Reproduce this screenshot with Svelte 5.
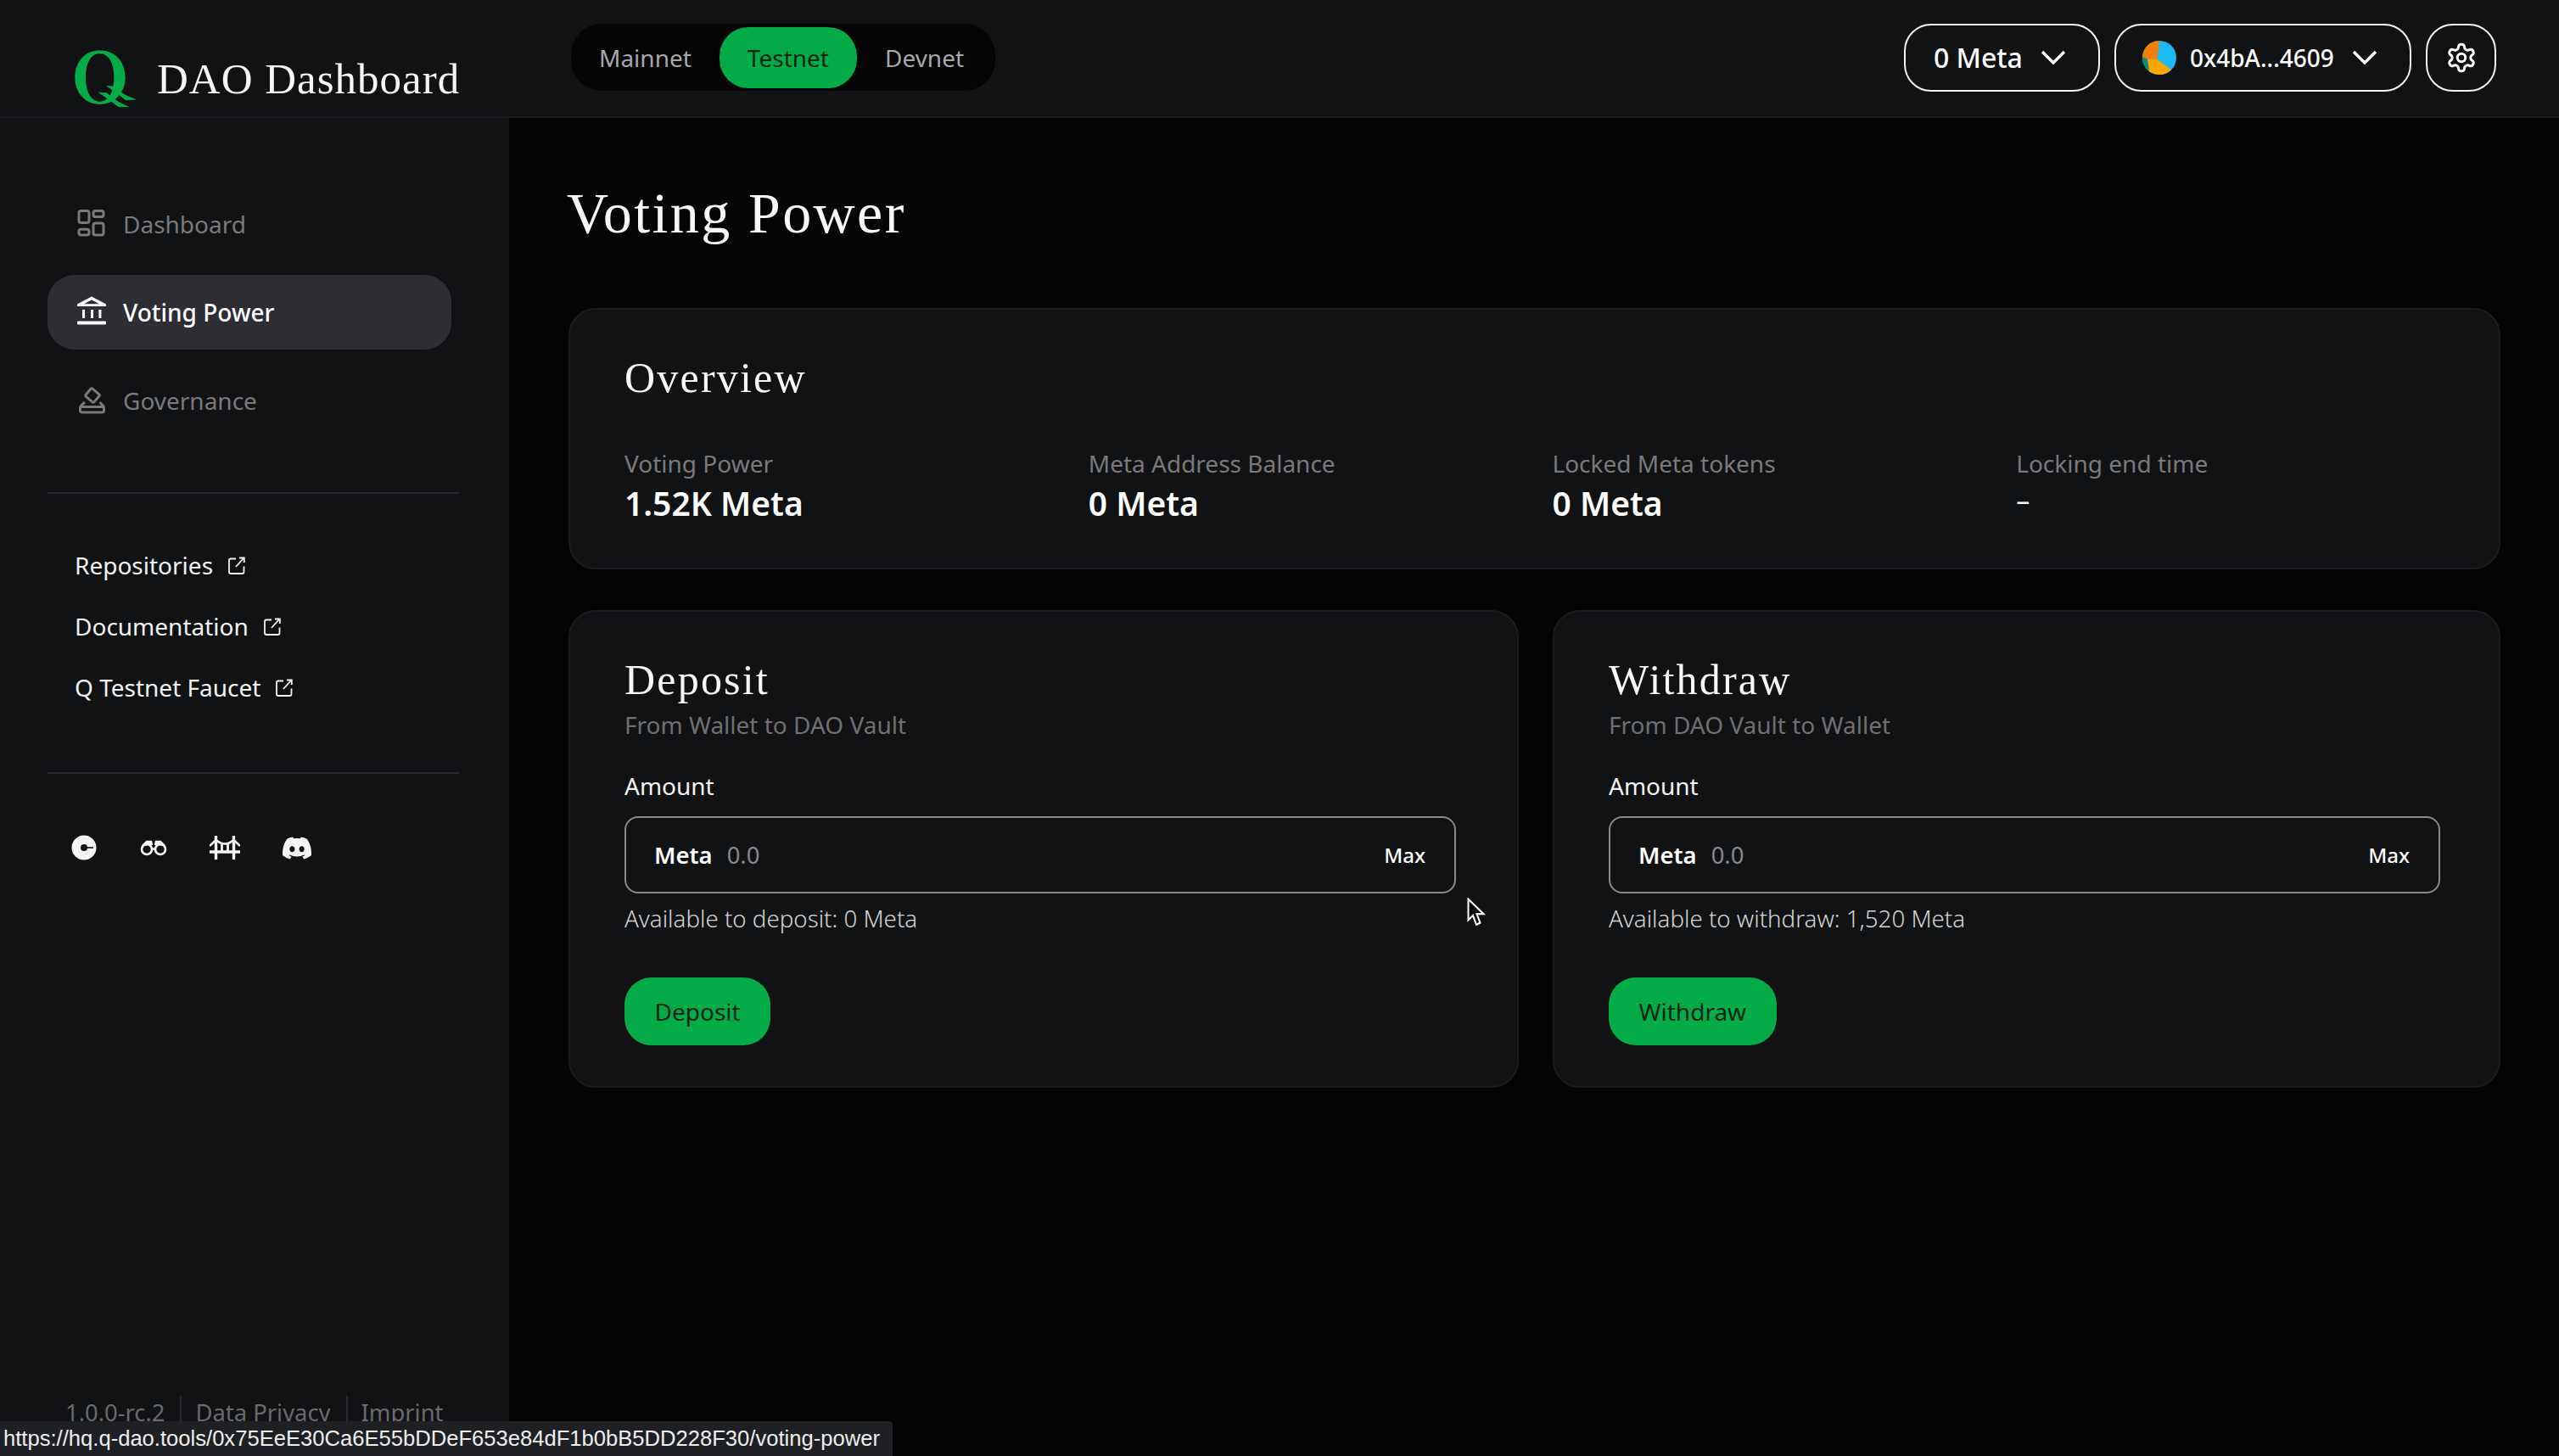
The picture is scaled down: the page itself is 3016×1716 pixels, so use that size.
<script>
    const networks = ["Mainnet", "Testnet", "Devnet"];
    const links = ["Repositories", "Documentation", "Q Testnet Faucet"];
    const stats = [
        { label: "Voting Power", value: "1.52K Meta" },
        { label: "Meta Address Balance", value: "0 Meta" },
        { label: "Locked Meta tokens", value: "0 Meta" },
        { label: "Locking end time", value: "–", empty: true },
    ];
    const forms = [
        { title: "Deposit", from: "From Wallet to DAO Vault", avail: "Available to deposit: 0 Meta" },
        { title: "Withdraw", from: "From DAO Vault to Wallet", avail: "Available to withdraw: 1,520 Meta" },
    ];
</script>

<div class="app">
    <header class="header">
        <div class="brand">
            <svg class="logo" width="90" height="84" viewBox="0 0 270 252">
                <path fill-rule="evenodd" fill="#04ab47" d="M113 22C60 22 25 65 25 118c0 54 36 95 88 95 53 0 90-42 90-96 0-54-37-95-90-95zm0 11c32 0 50 36 50 85 0 50-18 85-50 85-33 0-50-37-50-85 0-50 18-85 50-85z"/>
                <path fill="#04ab47" d="M135 147 L165 149 Q190 178 243 196 L205 199 Q172 172 135 147z"/>
                <path fill="#04ab47" d="M106 170 L138 172 Q170 205 218 222 L180 223 Q145 195 106 170z"/>
            </svg>
            <span class="brand-name">DAO Dashboard</span>
        </div>
        <div class="tabs">
            {#each networks as net}
                <div class="tab" class:active={net === "Testnet"}>{net}</div>
            {/each}
        </div>
        <div class="actions">
            <button class="pill-btn balance">
                <span>0 Meta</span>
                <svg width="30" height="17" viewBox="0 0 30 17"><path d="M2 2l13 13L28 2" fill="none" stroke="#fff" stroke-width="3.400"/></svg>
            </button>
            <button class="pill-btn wallet">
                <svg width="40" height="40" viewBox="0 0 120 120">
                    <defs><clipPath id="round"><circle cx="60" cy="60" r="60"/></clipPath></defs>
                    <g clip-path="url(#round)">
                        <rect width="120" height="120" fill="#1db9f2"/>
                        <path d="M0 0H60L52 65H0z" fill="#f57f00"/>
                        <path d="M15 65 52 65 108 108 70 130 10 120z" fill="#fca600"/>
                        <path d="M0 58 18 65 26 120 0 120z" fill="#0b8a7f"/>
                    </g>
                </svg>
                <span class="addr">0x4bA...4609</span>
                <svg width="30" height="17" viewBox="0 0 30 17"><path d="M2 2l13 13L28 2" fill="none" stroke="#fff" stroke-width="3.400"/></svg>
            </button>
            <button class="pill-btn gear">
                <svg width="38" height="38" viewBox="0 0 24 24" fill="none" stroke="#fff" stroke-width="1.900">
                    <path d="M12.22 2h-.44a2 2 0 0 0-2 2v.18a2 2 0 0 1-1 1.73l-.43.25a2 2 0 0 1-2 0l-.15-.08a2 2 0 0 0-2.73.73l-.22.38a2 2 0 0 0 .73 2.73l.15.1a2 2 0 0 1 1 1.72v.51a2 2 0 0 1-1 1.74l-.15.09a2 2 0 0 0-.73 2.73l.22.38a2 2 0 0 0 2.73.73l.15-.08a2 2 0 0 1 2 0l.43.25a2 2 0 0 1 1 1.73V20a2 2 0 0 0 2 2h.44a2 2 0 0 0 2-2v-.18a2 2 0 0 1 1-1.73l.43-.25a2 2 0 0 1 2 0l.15.08a2 2 0 0 0 2.73-.73l.22-.39a2 2 0 0 0-.73-2.73l-.15-.08a2 2 0 0 1-1-1.74v-.5a2 2 0 0 1 1-1.74l.15-.09a2 2 0 0 0 .73-2.73l-.22-.38a2 2 0 0 0-2.73-.73l-.15.08a2 2 0 0 1-2 0l-.43-.25a2 2 0 0 1-1-1.73V4a2 2 0 0 0-2-2z"/>
                    <circle cx="12" cy="12" r="3"/>
                </svg>
            </button>
        </div>
    </header>

    <div class="body">
        <aside class="sidebar">
            <nav class="nav">
                <div class="nav-item">
                    <svg width="40" height="40" viewBox="0 0 40 40" fill="none" stroke="#7a7a7c" stroke-width="3">
                        <rect x="5" y="4.600" width="12" height="14" rx="2.500"/>
                        <rect x="22" y="4.600" width="12" height="7" rx="2.500"/>
                        <rect x="5" y="26.300" width="12" height="6.700" rx="2.500"/>
                        <rect x="22" y="19" width="12" height="14" rx="2.500"/>
                    </svg>
                    Dashboard
                </div>
                <div class="nav-item active">
                    <svg width="40" height="40" viewBox="0 0 40 40" fill="#fff">
                        <path fill-rule="evenodd" d="M20 1.500 37 10.500V13H3V10.500zM20 5.500 11 10.300H29z"/>
                        <rect x="9" y="17" width="3" height="10"/>
                        <rect x="19" y="17" width="3" height="10"/>
                        <rect x="28.400" y="17" width="3" height="10"/>
                        <rect x="3" y="30.500" width="34" height="4" rx="1"/>
                    </svg>
                    Voting Power
                </div>
                <div class="nav-item">
                    <svg width="40" height="40" viewBox="0 0 40 40" fill="none" stroke="#7a7a7c" stroke-width="3">
                        <rect x="14.500" y="8" width="13" height="12" rx="1.500" transform="rotate(40 21 14)"/>
                        <path d="M12 22 8 25.500Q6.500 27 6.500 29V31.500Q6.500 34 9 34H32Q34.500 34 34.500 31.500V29Q34.500 27 33 25.500L29.500 22"/>
                        <path d="M7 27.500H34"/>
                    </svg>
                    Governance
                </div>
            </nav>

            <div class="divider first"></div>

            <div class="links">
                {#each links as link}
                    <div class="link">
                        {link}
                        <svg width="20" height="21" viewBox="0 0 20 21" fill="none" stroke="#f2f2f2" stroke-width="1.800">
                            <path d="M9 2.500H3Q1 2.500 1 4.500V18Q1 20 3 20H16.500Q18.500 20 18.500 18V11.500"/>
                            <path d="M9 12 18 2M13 1.500H18.800V7"/>
                        </svg>
                    </div>
                {/each}
            </div>

            <div class="divider second"></div>

            <div class="socials">
                <svg width="32" height="30" viewBox="0 0 32 30">
                    <circle cx="16" cy="15" r="14.500" fill="#f5f5f5"/>
                    <circle cx="16" cy="15" r="4" fill="#121316"/>
                    <path d="M16 15H27" stroke="#121316" stroke-width="1.600"/>
                </svg>
                <svg width="32" height="30" viewBox="0 0 32 30" fill="none" stroke="#f5f5f5" stroke-width="2.600">
                    <circle cx="8" cy="17" r="6"/>
                    <circle cx="24" cy="17" r="6"/>
                    <path d="M3 13 8 8H13L14 12M29 13 24 8H19L18 12" fill="#f5f5f5"/>
                    <path d="M14.500 16.500H17.500"/>
                </svg>
                <svg width="36" height="28" viewBox="0 0 36 28" fill="none" stroke="#f5f5f5" stroke-width="3.400">
                    <path d="M7.500 0V28M28.500 0V28M0 19H36"/>
                    <path d="M0 12 7.500 5Q18 14 28.500 5L36 12" stroke-width="2.600"/>
                    <path d="M14.500 10V19M21.500 10V19" stroke-width="2.800"/>
                </svg>
                <svg width="34" height="27" viewBox="0 2.500 24 19" fill="#f5f5f5">
                    <path d="M20.317 4.37a19.791 19.791 0 0 0-4.885-1.515.074.074 0 0 0-.079.037c-.21.375-.444.864-.608 1.25a18.27 18.27 0 0 0-5.487 0 12.64 12.64 0 0 0-.617-1.25.077.077 0 0 0-.079-.037A19.736 19.736 0 0 0 3.677 4.37a.07.07 0 0 0-.032.027C.533 9.046-.32 13.58.099 18.057a.082.082 0 0 0 .031.057 19.9 19.9 0 0 0 5.993 3.03.078.078 0 0 0 .084-.028 14.09 14.09 0 0 0 1.226-1.994.076.076 0 0 0-.041-.106 13.107 13.107 0 0 1-1.872-.892.077.077 0 0 1-.008-.128 10.2 10.2 0 0 0 .372-.292.074.074 0 0 1 .077-.01c3.928 1.793 8.18 1.793 12.062 0a.074.074 0 0 1 .078.01c.12.098.246.198.373.292a.077.077 0 0 1-.006.127 12.299 12.299 0 0 1-1.873.892.077.077 0 0 0-.041.107c.36.698.772 1.362 1.225 1.993a.076.076 0 0 0 .084.028 19.839 19.839 0 0 0 6.002-3.03.077.077 0 0 0 .032-.054c.5-5.177-.838-9.674-3.549-13.66a.061.061 0 0 0-.031-.03zM8.020 15.330c-1.183 0-2.157-1.085-2.157-2.419 0-1.333.956-2.419 2.157-2.419 1.210 0 2.176 1.096 2.157 2.420 0 1.333-.956 2.418-2.157 2.418zm7.975 0c-1.183 0-2.157-1.085-2.157-2.419 0-1.333.955-2.419 2.157-2.419 1.210 0 2.176 1.096 2.157 2.420 0 1.333-.946 2.418-2.157 2.418z"/>
                </svg>
            </div>

            <div class="footer">
                <span>1.0.0-rc.2</span>
                <span class="sep">Data Privacy</span>
                <span class="sep">Imprint</span>
            </div>
        </aside>

        <main class="main">
            <h1 class="title">Voting Power</h1>

            <section class="card overview">
                <h2 class="card-title">Overview</h2>
                <div class="stats">
                    {#each stats as stat}
                        <div>
                            <div class="stat-label">{stat.label}</div>
                            <div class="stat-value" class:empty={stat.empty}>{stat.value}</div>
                        </div>
                    {/each}
                </div>
            </section>

            <div class="forms">
                {#each forms as form}
                    <section class="card form">
                        <h2 class="card-title">{form.title}</h2>
                        <div class="from">{form.from}</div>
                        <div class="amount">Amount</div>
                        <div class="input">
                            <span class="unit">Meta</span>
                            <span class="placeholder">0.0</span>
                            <span class="max">Max</span>
                        </div>
                        <div class="avail">{form.avail}</div>
                        <button class="submit">{form.title}</button>
                    </section>
                {/each}
            </div>
        </main>
    </div>

    <svg class="cursor" width="24" height="34" viewBox="0 0 24 31" preserveAspectRatio="none">
        <path d="M1.500 1.500V24L7 19 11 29 15.500 27 11.500 17.500H19.500z" fill="#0a0a0a" stroke="#fff" stroke-width="2"/>
    </svg>
    <div class="status">https://hq.q-dao.tools/0x75EeE30Ca6E55bDDeF653e84dF1b0bB5DD228F30/voting-power</div>
</div>

<style>
    :global(body) {
        background: #040405;
        margin: 0;
    }

    .app {
        position: relative;
        height: 1716px;
        overflow: hidden;
        display: flex;
        flex-direction: column;
        font-family: "Noto Sans", "Open Sans", sans-serif;
        font-size: 28px;
        color: #fff;
    }

    /* top bar */
    .header {
        display: flex;
        align-items: center;
        box-sizing: border-box;
        height: 139px;
        padding: 0 74px 2px 80px;
        background: #111214;
        border-bottom: 2px solid #1a1b1e;
    }

    .brand {
        display: flex;
        align-items: center;
        width: 593px;
        margin-top: 50px;
    }

    .logo {
        margin-top: 2px;
    }

    .brand-name {
        margin-left: 15px;
        font-family: "Liberation Serif", serif;
        font-size: 51px;
        letter-spacing: 1px;
        color: #f5f5f5;
    }

    .tabs {
        display: flex;
        align-items: center;
        height: 79px;
        padding: 0 37px 0 33px;
        box-sizing: border-box;
        border-radius: 36px;
        background: #050506;
    }

    .tab {
        padding: 0 33px;
        height: 72px;
        line-height: 72px;
        border-radius: 34px;
        color: #a8a8aa;
    }

    .tab:first-child {
        padding-left: 0;
    }

    .tab:last-child {
        padding-right: 0;
    }

    .tab.active {
        background: #04ab47;
        color: #0c2615;
    }

    .actions {
        display: flex;
        gap: 17px;
        margin-left: auto;
    }

    .pill-btn {
        display: flex;
        align-items: center;
        box-sizing: border-box;
        height: 80px;
        border: 2px solid #f5f5f5;
        border-radius: 32px;
        background: none;
        color: #fff;
        font-family: inherit;
    }

    .balance {
        width: 231px;
        padding: 0 0 0 33px;
        gap: 21px;
        font-size: 32px;
        font-weight: 500;
    }

    .wallet {
        width: 350px;
        padding: 0 0 0 31px;
    }

    .addr {
        margin: 0 21px 0 16px;
        font-size: 28px;
        font-weight: 500;
    }

    .gear {
        width: 83px;
        padding: 0;
        justify-content: center;
    }

    /* sidebar */
    .body {
        flex: 1;
        display: flex;
        min-height: 0;
    }

    .sidebar {
        display: flex;
        flex-direction: column;
        box-sizing: border-box;
        width: 600px;
        padding: 81px 0 31px 56px;
        background: #111214;
    }

    .nav {
        display: flex;
        flex-direction: column;
        gap: 16px;
        width: 476px;
    }

    .nav-item {
        display: flex;
        align-items: center;
        gap: 17px;
        height: 88px;
        padding-left: 32px;
        border-radius: 32px;
        color: #7a7a7c;
    }

    .nav-item.active {
        background: #2d2d33;
        color: #fff;
        font-weight: 500;
    }

    .divider {
        width: 485px;
        height: 2px;
        background: #2a2b2e;
    }

    .first {
        margin-top: 64px;
    }

    .second {
        margin-top: 80px;
    }

    .links {
        display: flex;
        flex-direction: column;
        gap: 32px;
        margin-top: 64px;
        padding-left: 32px;
    }

    .link {
        display: flex;
        align-items: center;
        gap: 18px;
        height: 40px;
        color: #f2f2f2;
    }

    .socials {
        display: flex;
        align-items: center;
        gap: 50px;
        margin-top: 72px;
        padding-left: 27px;
    }

    .footer {
        display: flex;
        margin-top: auto;
        padding-left: 21px;
        font-size: 27.400px;
        line-height: 40px;
        color: #6a6a6c;
    }

    .sep {
        margin-left: 18px;
        padding-left: 16px;
        border-left: 2px solid #2a2b2e;
    }

    /* main column */
    .main {
        flex: 1;
        padding: 72px 69px 0 70px;
    }

    .title {
        margin: 0 0 72px -2px;
        font-family: "Liberation Serif", serif;
        font-size: 68px;
        font-weight: 400;
        line-height: 80px;
        letter-spacing: 2.400px;
        color: #f7f7f7;
    }

    .card {
        box-sizing: border-box;
        border: 2px solid #1b1c1f;
        border-radius: 32px;
        background: #111214;
    }

    .card-title {
        margin: 0;
        font-family: "Liberation Serif", serif;
        font-size: 50px;
        font-weight: 400;
        line-height: 60px;
        letter-spacing: 2.200px;
        color: #f7f7f7;
    }

    .overview {
        padding: 50px 65px 52px 64px;
    }

    .stats {
        display: grid;
        grid-template-columns: repeat(4, 1fr);
        gap: 43px;
        margin-top: 51px;
    }

    .stat-label {
        line-height: 40px;
        color: #7a7a7c;
    }

    .stat-value {
        margin-top: 3px;
        font-size: 39px;
        font-weight: 600;
        line-height: 48px;
    }

    .stat-value.empty {
        margin-top: 0;
        font-size: 32px;
        font-weight: 400;
    }

    .forms {
        display: grid;
        grid-template-columns: 1120px 1fr;
        gap: 40px;
        margin-top: 48px;
    }

    .form {
        padding: 50px 65px 48px 64px;
    }

    .from {
        margin-top: 3px;
        line-height: 40px;
        color: #707072;
    }

    .amount {
        margin-top: 32px;
        line-height: 40px;
        color: #f2f2f2;
    }

    .input {
        display: flex;
        align-items: center;
        box-sizing: border-box;
        width: 980px;
        height: 91px;
        margin-top: 16px;
        padding: 0 34px 0 33px;
        border: 2px solid #8a8a8c;
        border-radius: 16px;
    }

    .unit {
        font-size: 27.400px;
        font-weight: 600;
    }

    .placeholder {
        margin-left: 17px;
        font-size: 27.400px;
        color: #8a8a8c;
    }

    .max {
        margin-left: auto;
        font-size: 24px;
        font-weight: 500;
    }

    .avail {
        margin-top: 11px;
        font-size: 27.700px;
        font-weight: 300;
        line-height: 36px;
        color: #d4d4d4;
    }

    .submit {
        display: block;
        height: 80px;
        margin-top: 52px;
        padding: 0 35.500px;
        border: 0;
        border-radius: 32px;
        background: #04ab47;
        color: #0c2615;
        font-family: inherit;
        font-size: 28px;
    }

    /* overlays */
    .cursor {
        position: absolute;
        left: 1729px;
        top: 1058px;
    }

    .status {
        position: absolute;
        left: 0;
        bottom: 0;
        width: 1052px;
        height: 41px;
        padding-left: 4px;
        box-sizing: border-box;
        border-top-right-radius: 4px;
        background: #1f2023;
        color: #eee;
        font-family: "Liberation Sans", sans-serif;
        font-size: 25.600px;
        line-height: 40px;
        white-space: nowrap;
    }
</style>
